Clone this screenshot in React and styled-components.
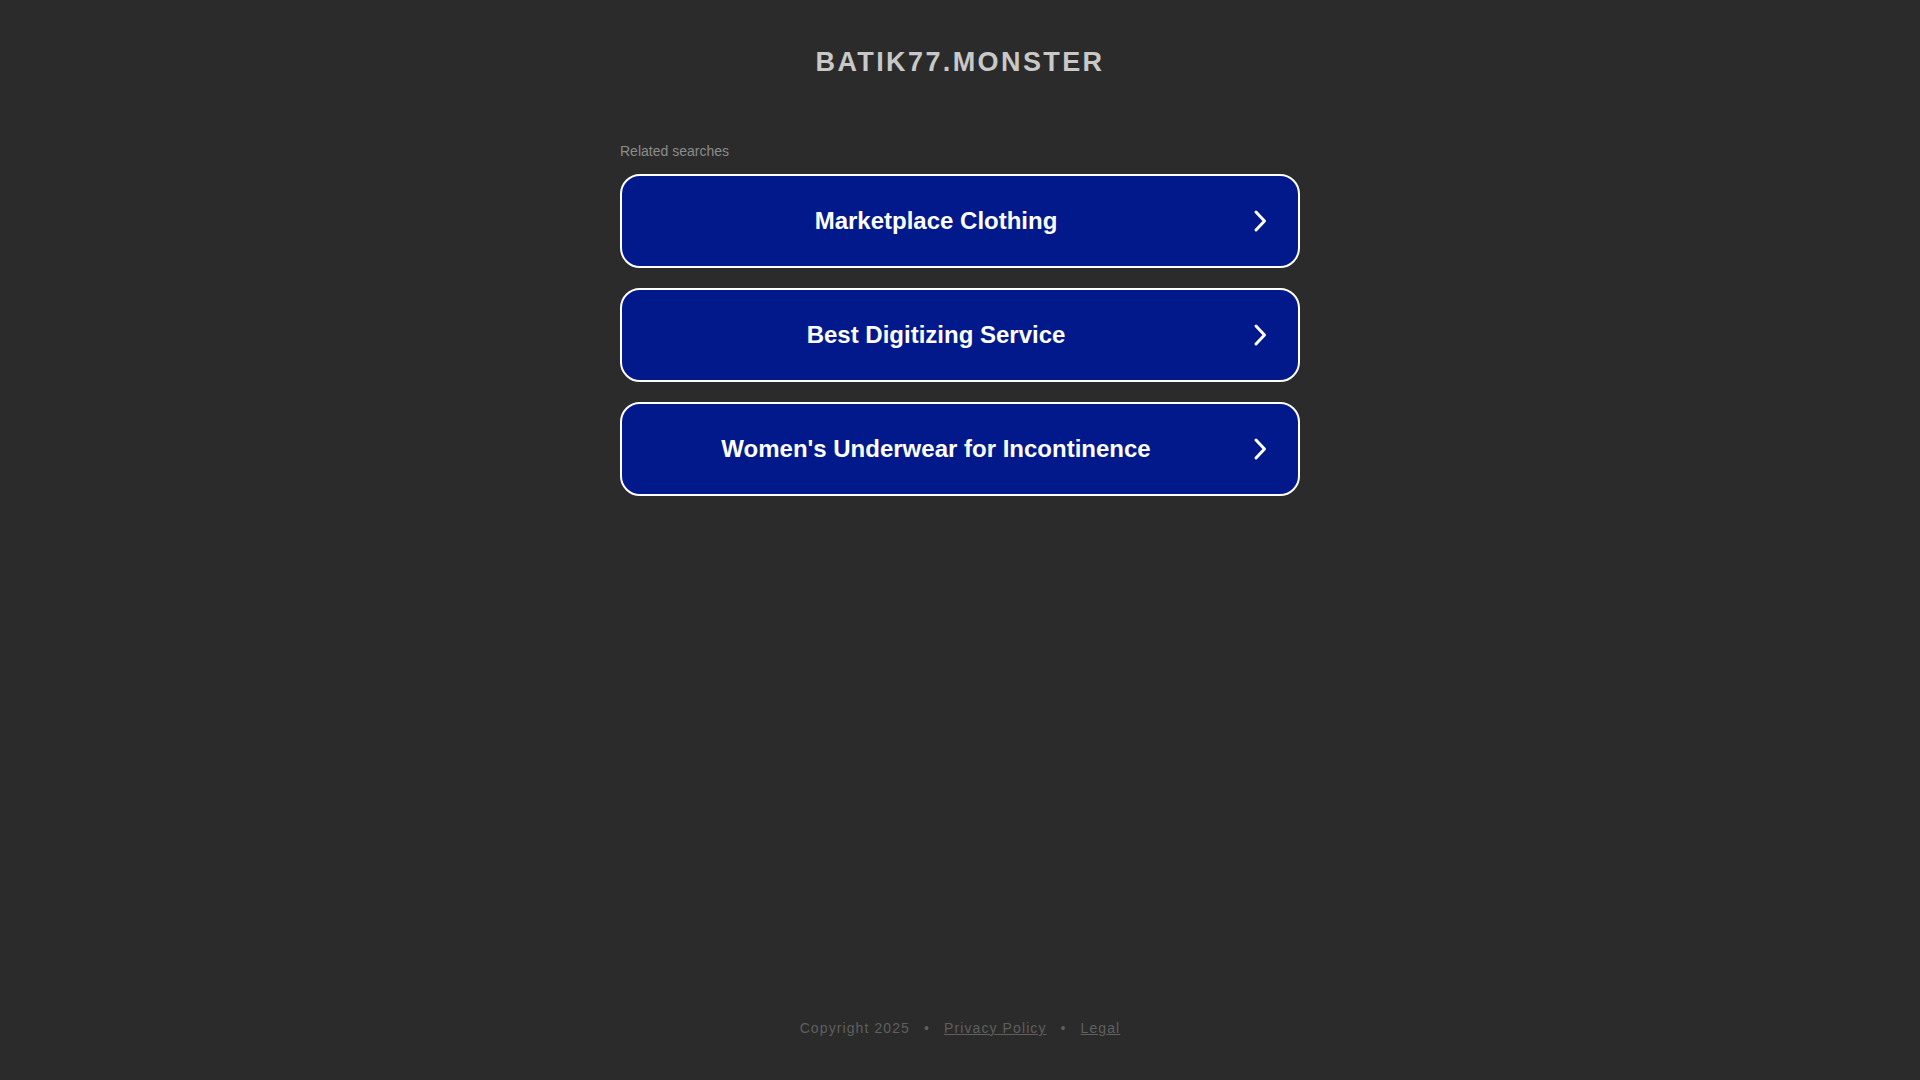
import React from "react";
import styled, { createGlobalStyle } from "styled-components";

const GlobalStyle = createGlobalStyle`
  html, body {
    margin: 0;
    padding: 0;
    background: #2b2b2b;
    font-family: "Liberation Sans", Arial, sans-serif;
  }
`;

const Page = styled.div`
  display: flex;
  flex-direction: column;
  align-items: center;
  min-height: 100vh;
  box-sizing: border-box;
  padding: 47px 0 44px;
`;

const Title = styled.h1`
  margin: 0;
  font-size: 27px;
  line-height: 30px;
  font-weight: 700;
  letter-spacing: 2.4px;
  color: #c8c8c8;
  text-align: center;
`;

const Main = styled.main`
  flex: 1;
  width: 680px;
  padding-top: 66px;
`;

const Caption = styled.div`
  font-size: 14px;
  line-height: 16px;
  color: #8c8c8c;
  margin-bottom: 15px;
`;

const List = styled.div`
  display: flex;
  flex-direction: column;
  gap: 20px;
`;

const SearchLink = styled.a`
  display: flex;
  align-items: center;
  box-sizing: border-box;
  height: 94px;
  border: 2px solid #ffffff;
  border-radius: 20px;
  background: #01198a;
  color: #ffffff;
  text-decoration: none;
  cursor: pointer;
`;

const Label = styled.span`
  flex: 1;
  text-align: center;
  font-size: 24px;
  font-weight: 700;
  padding-right: 3px;
`;

const Chevron = styled.svg`
  width: 14px;
  height: 24px;
  margin-right: 31px;
  flex-shrink: 0;
`;

const Footer = styled.footer`
  display: flex;
  align-items: center;
  gap: 14px;
  font-size: 14px;
  line-height: 16px;
  letter-spacing: 1.1px;
  color: #5f5f5f;
`;

const FooterLink = styled.a`
  color: #5f5f5f;
  text-decoration: underline;
  cursor: pointer;
`;

const searches = [
  "Marketplace Clothing",
  "Best Digitizing Service",
  "Women's Underwear for Incontinence",
];

const App = () => {
  return (
    <>
      <GlobalStyle />
      <Page>
        <Title>BATIK77.MONSTER</Title>
        <Main>
          <Caption>Related searches</Caption>
          <List>
            {searches.map((s) => (
              <SearchLink key={s}>
                <Label>{s}</Label>
                <Chevron viewBox="0 0 14 24">
                  <polyline
                    points="3,3 11.5,12 3,21"
                    fill="none"
                    stroke="#ffffff"
                    strokeWidth="3"
                    strokeLinecap="round"
                    strokeLinejoin="round"
                  />
                </Chevron>
              </SearchLink>
            ))}
          </List>
        </Main>
        <Footer>
          <span>Copyright 2025</span>
          <span>•</span>
          <FooterLink>Privacy Policy</FooterLink>
          <span>•</span>
          <FooterLink>Legal</FooterLink>
        </Footer>
      </Page>
    </>
  );
};

export default App;
